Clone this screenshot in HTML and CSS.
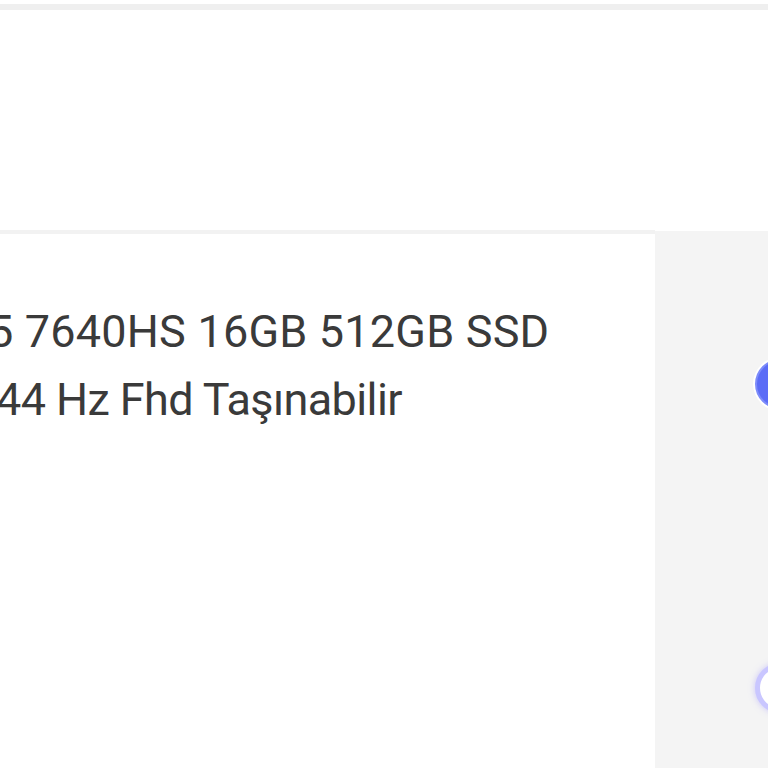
FILE: index.html
```html
<!DOCTYPE html>
<html lang="tr">
<head>
<meta charset="utf-8">
<link rel="stylesheet" href="styles.css">
</head>
<body>
<div class="topbar"></div>
<div class="header"></div>
<div class="main">
  <div class="product">
    <div class="title">
      <div class="line l1">5 7640HS 16GB 512GB SSD</div>
      <div class="line l2">44 Hz Fhd Taşınabilir</div>
    </div>
  </div>
  <div class="side">
    <div class="radio checked"></div>
    <div class="radio"></div>
  </div>
</div>
</body>
</html>
```
FILE: styles.css
```css
html, body {
  margin: 0;
  padding: 0;
  background: #ffffff;
  overflow: hidden;
  width: 768px;
  height: 768px;
}
.topbar {
  height: 4px;
  background: #ffffff;
  border-bottom: 6px solid #efefef;
  box-shadow: 0 2px 3px rgba(0,0,0,0.02);
}
.header {
  height: 221px;
  background: #ffffff;
}
.main {
  display: flex;
  height: 540px;
}
.product {
  flex: none;
  width: 655px;
  background: #ffffff;
  border-top: 4px solid #f2f2f2;
  margin-top: -1px;
  padding-top: 64px;
  box-sizing: border-box;
  overflow: hidden;
}
.title {
  font-family: Roboto, "Noto Sans", sans-serif;
  font-size: 45px;
  line-height: 68px;
  color: #3a3a3a;
  white-space: nowrap;
}
.l1 { margin-left: -12px; letter-spacing: 0.2px; }
.l2 { margin-left: -4px; letter-spacing: -0.6px; }
.side {
  flex: 1;
  min-width: 0;
  overflow: hidden;
  background: #f4f4f4;
  padding-top: 128px;
  padding-left: 100px;
  display: flex;
  flex-direction: column;
  gap: 254px;
}
.radio {
  width: 50px;
  height: 50px;
  border-radius: 50%;
  box-sizing: border-box;
  background: #ffffff;
  border: 5px solid #c9c6ff;
  box-shadow: 0 0 6px rgba(160,150,255,0.5);
  flex: none;
}
.radio.checked {
  background: #5b6cf6;
  border: 2px solid #7d8cfa;
  box-shadow: 0 0 0 2px #ffffff;
}
```
